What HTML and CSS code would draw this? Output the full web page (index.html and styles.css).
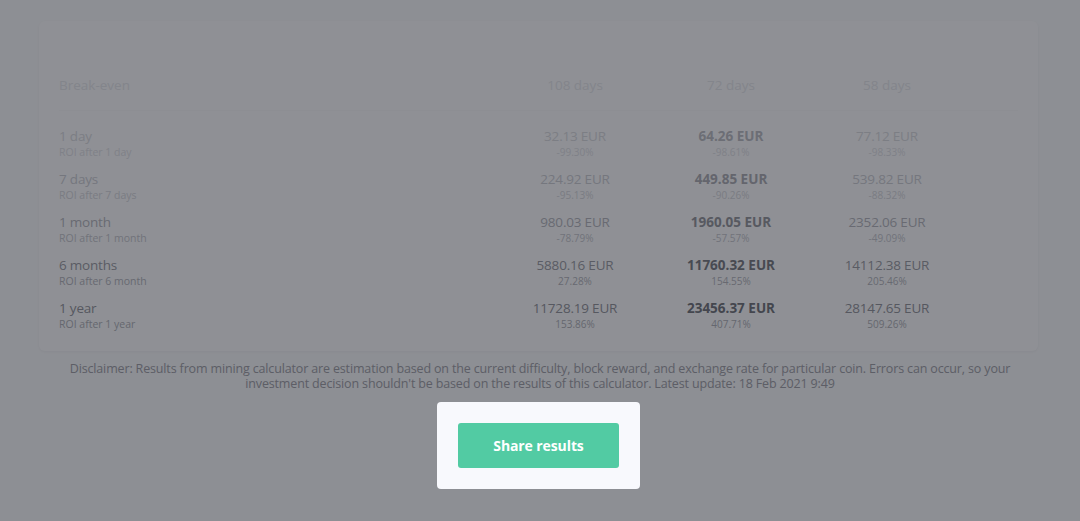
FILE: index.html
```html
<!DOCTYPE html>
<html>
<head>
<meta charset="utf-8">
<link rel="stylesheet" href="styles.css">
</head>
<body>
<main class="page">
  <section class="card">
    <div class="row head">
      <div class="label">Break-even</div>
      <div class="val">108 days</div>
      <div class="val">72 days</div>
      <div class="val">58 days</div>
    </div>
    <div class="rows">
      <div class="row r1">
        <div class="label"><div class="main">1 day</div><div class="sub">ROI after 1 day</div></div>
        <div class="val"><div class="main">32.13 EUR</div><div class="sub">-99.30%</div></div>
        <div class="val best"><div class="main">64.26 EUR</div><div class="sub">-98.61%</div></div>
        <div class="val"><div class="main">77.12 EUR</div><div class="sub">-98.33%</div></div>
      </div>
      <div class="row r2">
        <div class="label"><div class="main">7 days</div><div class="sub">ROI after 7 days</div></div>
        <div class="val"><div class="main">224.92 EUR</div><div class="sub">-95.13%</div></div>
        <div class="val best"><div class="main">449.85 EUR</div><div class="sub">-90.26%</div></div>
        <div class="val"><div class="main">539.82 EUR</div><div class="sub">-88.32%</div></div>
      </div>
      <div class="row r3">
        <div class="label"><div class="main">1 month</div><div class="sub">ROI after 1 month</div></div>
        <div class="val"><div class="main">980.03 EUR</div><div class="sub">-78.79%</div></div>
        <div class="val best"><div class="main">1960.05 EUR</div><div class="sub">-57.57%</div></div>
        <div class="val"><div class="main">2352.06 EUR</div><div class="sub">-49.09%</div></div>
      </div>
      <div class="row r4">
        <div class="label"><div class="main">6 months</div><div class="sub">ROI after 6 month</div></div>
        <div class="val"><div class="main">5880.16 EUR</div><div class="sub">27.28%</div></div>
        <div class="val best"><div class="main">11760.32 EUR</div><div class="sub">154.55%</div></div>
        <div class="val"><div class="main">14112.38 EUR</div><div class="sub">205.46%</div></div>
      </div>
      <div class="row r5">
        <div class="label"><div class="main">1 year</div><div class="sub">ROI after 1 year</div></div>
        <div class="val"><div class="main">11728.19 EUR</div><div class="sub">153.86%</div></div>
        <div class="val best"><div class="main">23456.37 EUR</div><div class="sub">407.71%</div></div>
        <div class="val"><div class="main">28147.65 EUR</div><div class="sub">509.26%</div></div>
      </div>
    </div>
  </section>
  <p class="disclaimer">Disclaimer: Results from mining calculator are estimation based on the current difficulty, block reward, and exchange rate for particular coin. Errors can occur, so your<br>investment decision shouldn't be based on the results of this calculator. Latest update: 18 Feb 2021 9:49</p>
  <div class="share-wrap">
    <div class="spotlight">
      <button class="share">Share results</button>
    </div>
  </div>
</main>
</body>
</html>
```

FILE: styles.css
```css
html, body {
  margin: 0;
  padding: 0;
}
body {
  background: #f8f9fd;
  font-family: "Open Sans", "Noto Sans", "Liberation Sans", sans-serif;
  width: 1080px;
  height: 521px;
  overflow: hidden;
}
.page {
  padding-top: 21px;
}
.card {
  margin: 0 42px 0 39px;
  background: #fbfcff;
  border-radius: 6px;
  box-shadow: 0 1px 3px rgba(0, 0, 0, 0.04);
  padding: 53px 20px 20px 20px;
}
.row {
  display: grid;
  grid-template-columns: 1fr 156px 156px 156px 53px;
  align-items: start;
}
.head {
  font-size: 13.5px;
  line-height: 22px;
  color: #e6e7ed;
  padding-bottom: 14px;
  border-bottom: 1px solid #f7f8fb;
}
.rows {
  display: flex;
  flex-direction: column;
  gap: 11px;
  padding-top: 16px;
}
.val {
  text-align: center;
}
.main {
  font-size: 13.5px;
  line-height: 18px;
  letter-spacing: -0.2px;
}
.sub {
  font-size: 10px;
  line-height: 14px;
}
.label .sub {
  font-size: 10.5px;
}
.best .main {
  font-weight: 700;
  letter-spacing: 0;
}
.r1 { color: #d9dae1; }
.r1 .sub { color: #dfe0e7; }
.r1 .best .main { color: #bcbdc5; }
.r2 { color: #cdced6; }
.r2 .sub { color: #d6d7de; }
.r2 .best .main { color: #adaeb6; }
.r3 { color: #b6b7bf; }
.r3 .sub { color: #c6c7cf; }
.r3 .best .main { color: #96979f; }
.r4 { color: #9c9da6; }
.r4 .sub { color: #b4b5be; }
.r4 .best .main { color: #7a7c85; }
.r5 { color: #94959e; }
.r5 .sub { color: #b0b1ba; }
.r5 .best .main { color: #73757e; }
.disclaimer {
  margin: 10px 0 0 0;
  text-align: center;
  font-size: 12.5px;
  line-height: 15px;
  letter-spacing: -0.15px;
  color: #a0a1aa;
}
.share-wrap {
  display: flex;
  justify-content: center;
  margin-top: 11px;
  padding-right: 3px;
}
.spotlight {
  position: relative;
  z-index: 2;
  background: #f8f9fd;
  border-radius: 4px;
  padding: 21px;
  box-shadow: 0 0 0 2000px rgba(12, 13, 20, 0.45);
}
.share {
  display: block;
  width: 161px;
  height: 45px;
  border: 0;
  border-radius: 3px;
  background: #52cba3;
  color: #ffffff;
  font-family: "Open Sans", "Noto Sans", sans-serif;
  font-weight: 700;
  font-size: 14px;
  letter-spacing: -0.1px;
  cursor: pointer;
}
```
